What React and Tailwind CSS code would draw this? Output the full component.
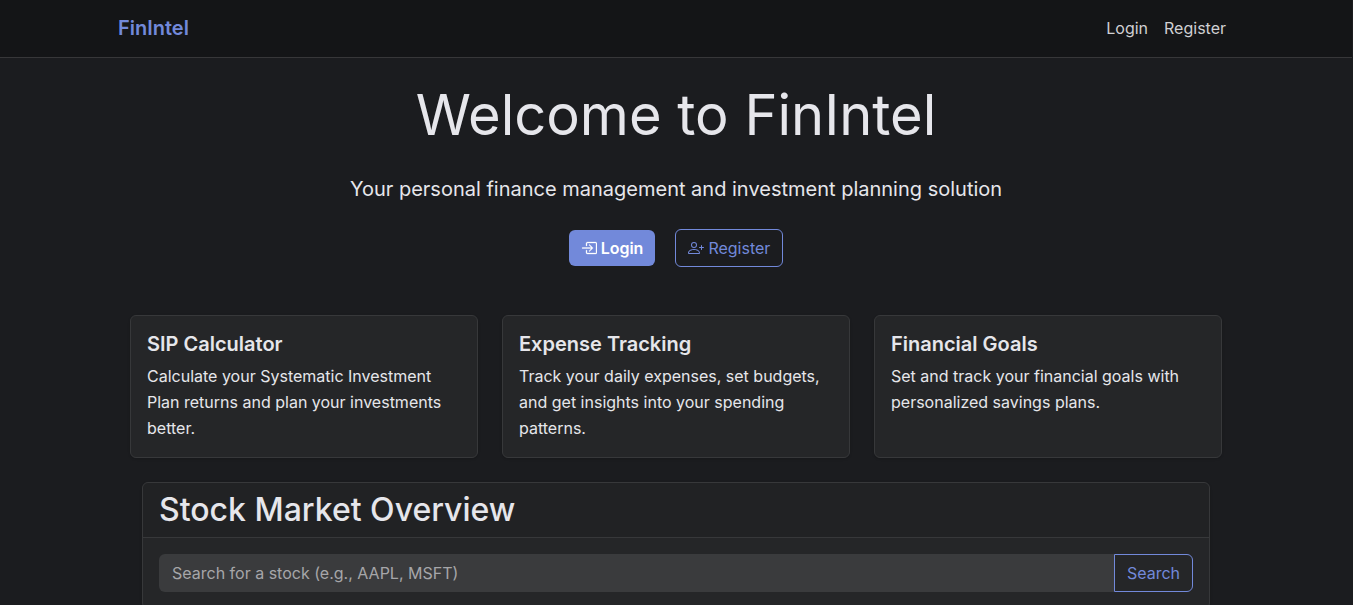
import { BsBoxArrowInRight, BsPersonPlus } from 'react-icons/bs'

const features = [
  {
    title: 'SIP Calculator',
    text: 'Calculate your Systematic Investment Plan returns and plan your investments better.'
  },
  {
    title: 'Expense Tracking',
    text: 'Track your daily expenses, set budgets, and get insights into your spending patterns.'
  },
  {
    title: 'Financial Goals',
    text: 'Set and track your financial goals with personalized savings plans.'
  }
]

function Navbar() {
  return (
    <header className="bg-[#141517] border-b border-[#373739]">
      <nav className="max-w-[1140px] h-[57px] mx-auto px-3 pb-0.5 flex items-center justify-between">
        <a href="#" className="text-xl font-semibold text-[#7289da]">FinIntel</a>
        <div className="flex pr-2 gap-4 text-[#d0d0d3]">
          <a href="#login">Login</a>
          <a href="#register">Register</a>
        </div>
      </nav>
    </header>
  )
}

function Hero() {
  return (
    <section className="flex flex-col items-center text-center">
      <h1 className="text-[56px] leading-[68px] font-normal">Welcome to FinIntel</h1>
      <p className="mt-6 text-xl leading-8">
        Your personal finance management and investment planning solution
      </p>
      <div className="mt-6 flex items-center gap-5">
        <a
          href="#login"
          className="h-9 px-3 flex items-center gap-1 rounded-md bg-[#7289da] font-semibold text-white"
        >
          <BsBoxArrowInRight className="w-4 h-4" strokeWidth="0.3" />
          Login
        </a>
        <a
          href="#register"
          className="h-[38px] px-3 flex items-center gap-1 rounded-md border border-[#7289da] text-[#7289da]"
        >
          <BsPersonPlus className="w-4 h-4" />
          Register
        </a>
      </div>
    </section>
  )
}

function FeatureCard({ title, text }) {
  return (
    <article className="p-4 bg-[#252628] border border-[#37383a] rounded-md shadow-sm">
      <h2 className="mb-[7px] text-xl leading-6 font-semibold">{title}</h2>
      <p className="leading-[26px]">{text}</p>
    </article>
  )
}

function StockOverview() {
  return (
    <section className="mx-3 bg-[#252628] border border-[#37383a] rounded-md shadow-sm">
      <div className="px-4 py-2 bg-[#212224] border-b border-[#37383a] rounded-t-md">
        <h2 className="text-[32px] leading-[38px] font-medium">Stock Market Overview</h2>
      </div>
      <form className="p-4 flex" onSubmit={(e) => e.preventDefault()}>
        <input
          type="text"
          aria-label="Search for a stock"
          placeholder="Search for a stock (e.g., AAPL, MSFT)"
          className="flex-1 min-w-0 h-[38px] px-[13px] rounded-l-md bg-[#3a3b3d] text-[#e6e6eb] placeholder:text-[#a6a6a9] outline-none"
        />
        <button
          type="submit"
          className="h-[38px] px-3 rounded-r-md border border-[#7289da] text-[#7289da]"
        >
          Search
        </button>
      </form>
    </section>
  )
}

export default function App() {
  return (
    <div className="min-h-screen pr-px bg-[#1b1c1f] text-[#e6e6eb] font-['Inter',sans-serif]">
      <Navbar />
      <main className="max-w-[1140px] mx-auto px-6 pt-[23px]">
        <Hero />
        <div className="mt-12 mb-6 grid grid-cols-3 gap-6">
          {features.map((f) => (
            <FeatureCard key={f.title} {...f} />
          ))}
        </div>
        <StockOverview />
      </main>
    </div>
  )
}
